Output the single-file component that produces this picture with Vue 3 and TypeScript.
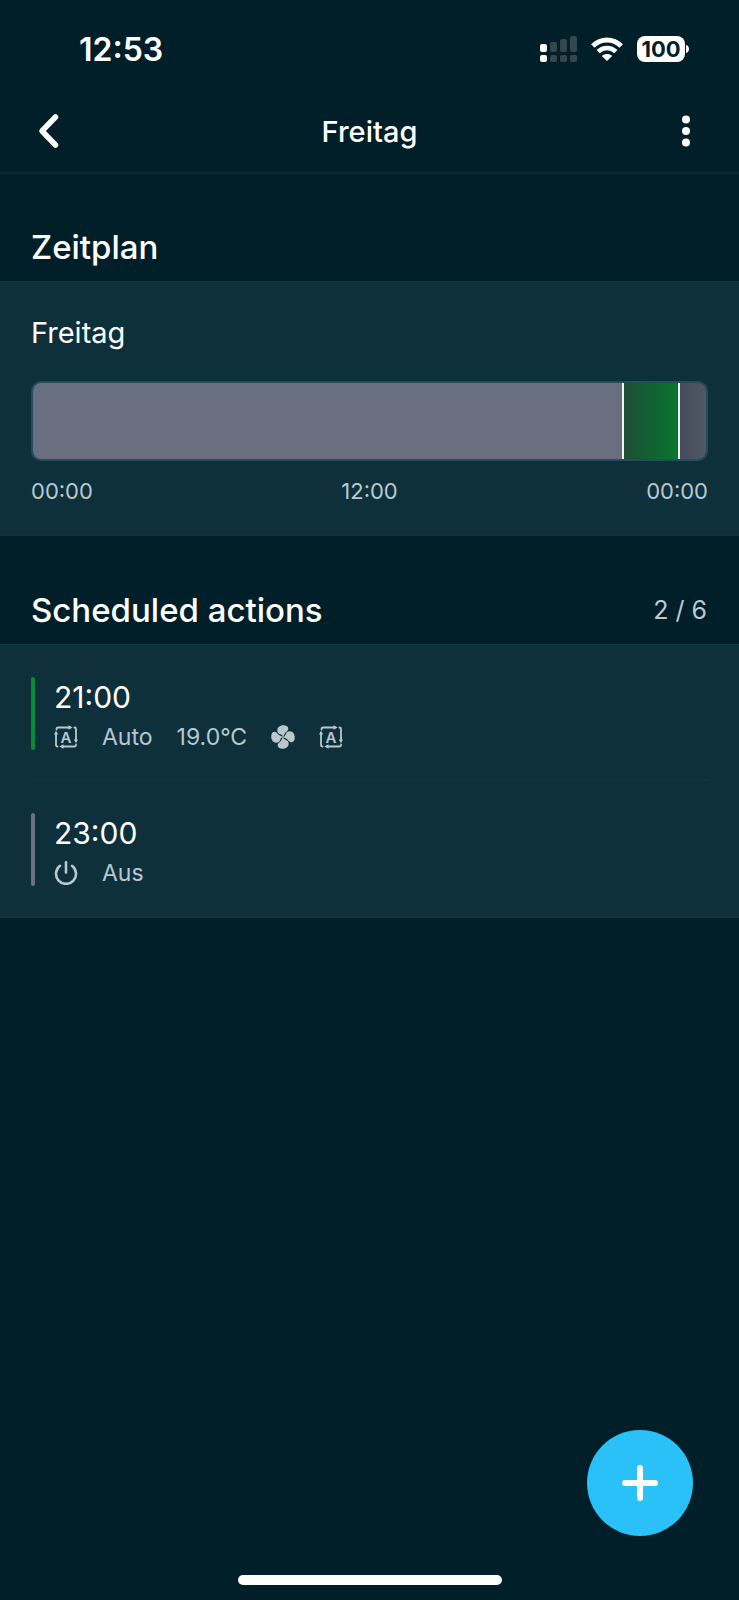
<script setup lang="ts">
interface Segment {
  hours: number
  kind: 'idle' | 'auto' | 'off'
}

interface Detail {
  icon?: 'auto' | 'fan' | 'power'
  label: string
}

interface Action {
  time: string
  kind: 'auto' | 'off'
  details: Detail[]
}

const day = 'Freitag'
const maxActions = 6

const segments: Segment[] = [
  { hours: 21, kind: 'idle' },
  { hours: 2, kind: 'auto' },
  { hours: 1, kind: 'off' },
]

const actions: Action[] = [
  {
    time: '21:00',
    kind: 'auto',
    details: [
      { icon: 'auto', label: 'Modus' },
      { label: 'Auto' },
      { label: '19.0°C' },
      { icon: 'fan', label: 'Lüfter' },
      { icon: 'auto', label: 'Automatisch' },
    ],
  },
  {
    time: '23:00',
    kind: 'off',
    details: [{ icon: 'power', label: 'Modus' }, { label: 'Aus' }],
  },
]
</script>

<template>
  <div class="screen">
    <div class="status">
      <span class="clock">12:53</span>
      <div class="indicators">
        <svg class="signal" viewBox="0 0 38 28" aria-hidden="true">
          <g fill="#33474f">
            <rect x="10" y="7" width="7" height="10" rx="2" />
            <rect x="20" y="4" width="7" height="13" rx="2" />
            <rect x="30" y="1" width="7" height="16" rx="2" />
            <rect x="10" y="20" width="7" height="7" rx="2" />
            <rect x="20" y="20" width="7" height="7" rx="2" />
            <rect x="30" y="20" width="7" height="7" rx="2" />
          </g>
          <rect x="0" y="9" width="7" height="8" rx="2" fill="#fff" />
          <rect x="0" y="20" width="7" height="7" rx="2" fill="#fff" />
        </svg>
        <svg class="wifi" viewBox="0 0 32 24" aria-hidden="true">
          <path d="M1.8 9C10 1 22 1 30.200 9" fill="none" stroke="#fff" stroke-width="5" />
          <path d="M7.200 14.600C12.200 9.800 19.800 9.800 24.800 14.600" fill="none" stroke="#fff" stroke-width="4.600" />
          <path d="M16 24 10.800 19C13.800 16.400 18.200 16.400 21.200 19Z" fill="#fff" />
        </svg>
        <div class="battery">
          <span class="charge">100</span>
          <svg class="cap" viewBox="0 0 3 8" aria-hidden="true"><path d="M0 0C4 1 4 7 0 8Z" fill="#fff" /></svg>
        </div>
      </div>
    </div>

    <header class="bar">
      <button class="nav" type="button" aria-label="Zurück">
        <svg viewBox="0 0 32 40" aria-hidden="true">
          <path d="M18.500 6 5 20l13.500 14" fill="none" stroke="#fff" stroke-width="5.500" stroke-linecap="round" stroke-linejoin="round" />
        </svg>
      </button>
      <h1>{{ day }}</h1>
      <button class="nav more" type="button" aria-label="Mehr">
        <svg viewBox="0 0 32 40" aria-hidden="true">
          <circle cx="16" cy="8.500" r="4" fill="#fff" />
          <circle cx="16" cy="20" r="4" fill="#fff" />
          <circle cx="16" cy="31.500" r="4" fill="#fff" />
        </svg>
      </button>
    </header>

    <main>
      <div class="heading">
        <h2>Zeitplan</h2>
      </div>
      <section class="panel plan">
        <h3>{{ day }}</h3>
        <div class="timeline">
          <div
            v-for="s in segments"
            :key="s.kind"
            class="segment"
            :class="s.kind"
            :style="{ width: (s.hours / 24) * 100 + '%' }"
          ></div>
        </div>
        <div class="scale">
          <span>00:00</span>
          <span>12:00</span>
          <span>00:00</span>
        </div>
      </section>

      <div class="heading">
        <h2>Scheduled actions</h2>
        <span class="count">{{ actions.length }} / {{ maxActions }}</span>
      </div>
      <ul class="panel list">
        <li v-for="a in actions" :key="a.time">
          <div class="action" :class="a.kind">
            <span class="time">{{ a.time }}</span>
            <div class="details">
              <template v-for="(d, i) in a.details" :key="i">
                <svg v-if="d.icon === 'auto'" class="icon" viewBox="0 0 24 24" role="img" :aria-label="d.label">
                  <g fill="none" stroke="currentColor" stroke-width="1.800" stroke-linecap="round">
                    <path d="M2.500 4.500V4q0-1.500 1.500-1.500H16" />
                    <path d="M20.500 2.500q1.500 0 1.500 1.500V15" />
                    <path d="M22 19.500V20q0 1.500-1.500 1.500H8" />
                    <path d="M3.500 21.500q-1.500 0-1.500-1.500V9" />
                  </g>
                  <g fill="currentColor">
                    <path d="M14.500 .300 18.600 2.500 14.500 4.700Z" />
                    <path d="M19.800 14.500h4.200L22 18.300Z" />
                    <path d="M9.500 19.300 5.400 21.500 9.500 23.700Z" />
                    <path d="M0 9.500h4.200L2 5.700Z" />
                    <text x="12" y="17.500" text-anchor="middle">A</text>
                  </g>
                </svg>
                <svg v-else-if="d.icon === 'fan'" class="icon" viewBox="0 0 24 24" role="img" :aria-label="d.label">
                  <path
                    v-for="angle in [0, 90, 180, 270]"
                    :key="angle"
                    fill="currentColor"
                    :transform="`rotate(${angle} 12 12)`"
                    d="M12.500 12.500C11.800 10.800 11 9.900 9.300 9.300C7.300 8.600 6.200 7.400 6.300 5.200C6.500 1.800 9.300 .200 12.500 .200C15.500 .200 17.300 1.600 17.300 3.700C17.300 6.800 13 6.500 12.500 12.500Z"
                  />
                </svg>
                <svg v-else-if="d.icon === 'power'" class="icon" viewBox="0 0 24 24" role="img" :aria-label="d.label">
                  <g fill="none" stroke="currentColor" stroke-width="2.600" stroke-linecap="round">
                    <path d="M12 1.300v10.200" />
                    <path d="M6 4.800A10 10 0 1 0 18 4.800" />
                  </g>
                </svg>
                <span v-else>{{ d.label }}</span>
              </template>
            </div>
          </div>
        </li>
      </ul>
    </main>

    <footer>
      <button class="add" type="button" aria-label="Aktion hinzufügen">
        <svg viewBox="0 0 36 36" aria-hidden="true">
          <path d="M18 3v30M3 18h30" stroke="#fff" stroke-width="6" stroke-linecap="round" />
        </svg>
      </button>
      <div class="home"></div>
    </footer>
  </div>
</template>

<style>
body {
  margin: 0;
  background: #001f28;
}
</style>

<style scoped>
.screen {
  box-sizing: border-box;
  min-height: 100vh;
  display: flex;
  flex-direction: column;
  background: #001f28;
  color: #fff;
  font-family: Inter, "Liberation Sans", sans-serif;
}

h1,
h2,
h3,
ul {
  margin: 0;
  padding: 0;
  font-weight: 400;
}

button {
  border: 0;
  padding: 0;
  background: none;
  cursor: pointer;
}

svg {
  display: block;
}

.status {
  display: flex;
  justify-content: space-between;
  align-items: center;
  height: 60px;
  padding: 19px 50px 9px 79px;
}

.clock {
  font-size: 32px;
  font-weight: 600;
}

.indicators {
  display: flex;
  align-items: center;
}

.signal {
  width: 38px;
  height: 28px;
}

.wifi {
  width: 32px;
  height: 24px;
  margin: 0 14px 0 13px;
}

.battery {
  display: flex;
  align-items: center;
  gap: 1px;
}

.charge {
  width: 48px;
  border-radius: 8px;
  background: #fff;
  color: #001f28;
  font-size: 22px;
  font-weight: 700;
  line-height: 26px;
  text-align: center;
}

.cap {
  width: 3px;
  height: 8px;
}

.bar {
  display: grid;
  grid-template-columns: 1fr auto 1fr;
  align-items: center;
  height: 82px;
  padding: 2px 37px 0;
  border-bottom: 2px solid #0b2a34;
}

h1 {
  font-size: 29px;
  font-weight: 500;
}

.nav,
.nav svg {
  width: 32px;
  height: 40px;
}

.more {
  justify-self: end;
}

.heading {
  display: flex;
  justify-content: space-between;
  align-items: center;
  height: 68px;
  padding: 39px 32px 0 31px;
}

h2 {
  font-size: 33px;
  font-weight: 500;
}

.count {
  color: #bdcad1;
  font-size: 25px;
}

.panel {
  border-top: 1px solid #0d3946;
  border-bottom: 1px solid #0d3946;
  background: #0d303b;
}

.plan {
  margin-bottom: 1px;
  padding: 31px 31px 29px;
}

h3 {
  font-size: 29px;
  line-height: 40px;
}

.timeline {
  display: flex;
  overflow: hidden;
  height: 76px;
  margin-top: 28px;
  border: 2px solid #234c5d;
  border-radius: 10px;
}

.segment {
  box-sizing: border-box;
  border-left: 2px solid #f0f5f3;
}

.segment:first-child {
  border-left: 0;
}

.segment.idle {
  background: #696f7e;
}

.segment.auto {
  background: linear-gradient(90deg, #1e4d36, #08752f);
}

.segment.off {
  background: linear-gradient(90deg, #464c59, #505864);
}

.scale {
  display: flex;
  justify-content: space-between;
  margin-top: 15px;
  color: #b9c9d2;
  font-size: 22px;
  line-height: 30px;
}

.list {
  list-style: none;
}

li {
  padding: 32px 31px 0;
}

li::after {
  content: "";
  display: block;
  height: 2px;
  margin-top: 29px;
  background: #0d3543;
}

li:last-child::after {
  background: none;
}

.action {
  position: relative;
  height: 73px;
  padding-left: 23px;
}

.action::before {
  content: "";
  position: absolute;
  top: 0;
  bottom: 0;
  left: 0;
  width: 4px;
  border-radius: 2px;
  background: #068a37;
}

.action.off::before {
  background: #6b7182;
}

.time {
  display: block;
  font-size: 30px;
  line-height: 40px;
}

.details {
  display: flex;
  align-items: center;
  gap: 24px;
  height: 40px;
  color: #b9c8cf;
  font-size: 23px;
}

.icon {
  width: 24px;
  height: 24px;
}

.icon text {
  font-size: 15px;
  font-weight: 600;
}

footer {
  display: flex;
  flex-direction: column;
  align-items: center;
  margin-top: auto;
  padding-bottom: 15px;
}

.add {
  display: grid;
  place-items: center;
  align-self: flex-end;
  width: 106px;
  height: 106px;
  margin: 0 46px 39px 0;
  border-radius: 50%;
  background: #29c1f7;
}

.add svg {
  width: 36px;
  height: 36px;
}

.home {
  width: 264px;
  height: 10px;
  border-radius: 5px;
  background: #fff;
}
</style>
